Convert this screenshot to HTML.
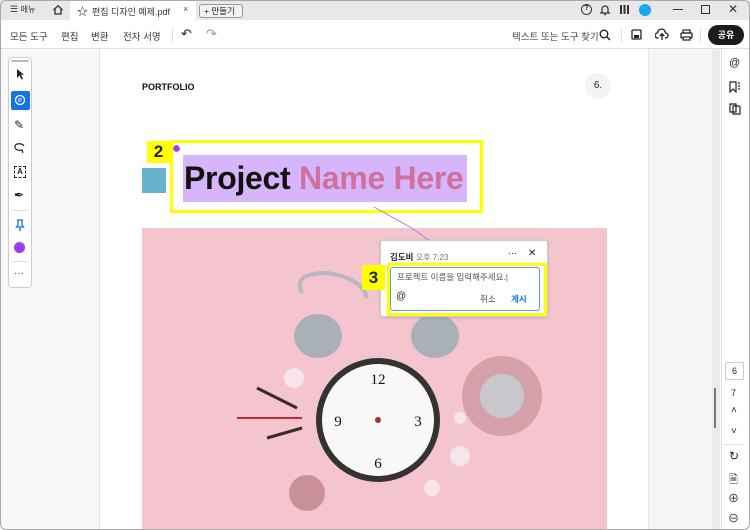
<!DOCTYPE html>
<html><head><meta charset="utf-8"><style>
*{box-sizing:border-box;margin:0;padding:0}
body{width:750px;height:530px;overflow:hidden;font-family:"Liberation Sans","Noto Sans CJK KR",sans-serif;background:#fff;position:relative;color:#222}
.a{position:absolute}
</style></head><body>
<div class="a" style="left:0;top:0;width:750px;height:20px;background:#e8e8e8"></div>
<div class="a" style="left:10px;top:4px;font-size:9px;color:#333">☰ <span style="font-size:8px">메뉴</span></div>
<svg class="a" style="left:52px;top:4px" width="12" height="12" viewBox="0 0 12 12"><path d="M1.5 6 6 1.8 10.5 6M3 5v5h6V5" fill="none" stroke="#333" stroke-width="1.3"/></svg>
<div class="a" style="left:70px;top:0;width:126px;height:21px;background:#fff"></div>
<div class="a" style="left:77px;top:3px;font-size:11px;color:#333">☆</div>
<div class="a" style="left:92px;top:5px;font-size:9px;color:#333">편집 디자인 예제.pdf</div>
<div class="a" style="left:183px;top:4px;font-size:9px;color:#555">×</div>
<div class="a" style="left:199px;top:4px;width:44px;height:14px;border:1px solid #999;border-radius:3px;font-size:8.5px;padding-left:4px;line-height:12px;background:#f2f2f2">+ 만들기</div>
<div class="a" style="left:581px;top:4px;width:11px;height:11px;border:1.3px solid #333;border-radius:50%;font-size:7px;text-align:center;line-height:8px;font-weight:bold">?</div>
<svg class="a" style="left:599px;top:3px" width="12" height="13"><path d="M3 9V6a3 3 0 0 1 6 0v3l1 1H2zM5 11.5h2" fill="none" stroke="#333" stroke-width="1.3"/></svg>
<div class="a" style="left:620px;top:5px;width:9px;height:9px;background:repeating-linear-gradient(90deg,#333 0 2px,transparent 2px 3.5px);"></div>
<div class="a" style="left:639px;top:4px;width:12px;height:12px;border-radius:50%;background:#1ba8e8"></div>
<div class="a" style="left:673px;top:9px;width:10px;height:1.3px;background:#333"></div>
<div class="a" style="left:701px;top:5px;width:9px;height:9px;border:1.2px solid #333"></div>
<div class="a" style="left:728px;top:2px;font-size:12px;color:#333">✕</div>
<div class="a" style="left:10px;top:29px;font-size:9.5px;color:#333">모든 도구</div>
<div class="a" style="left:61px;top:29px;font-size:9.5px;color:#333">편집</div>
<div class="a" style="left:91px;top:29px;font-size:9.5px;color:#333">변환</div>
<div class="a" style="left:123px;top:29px;font-size:9.5px;color:#333">전자 서명</div>
<div class="a" style="left:172px;top:28px;width:1px;height:14px;background:#ddd"></div>
<div class="a" style="left:181px;top:26px;font-size:13px;color:#222">↶</div>
<div class="a" style="left:206px;top:26px;font-size:13px;color:#999">↷</div>
<div class="a" style="left:512px;top:29px;font-size:9.5px;color:#444">텍스트 또는 도구 찾기</div>
<svg class="a" style="left:599px;top:29px" width="12" height="12"><circle cx="5" cy="5" r="3.8" fill="none" stroke="#222" stroke-width="1.4"/><path d="M8 8 11 11" stroke="#222" stroke-width="1.5"/></svg>
<div class="a" style="left:621px;top:28px;width:1px;height:14px;background:#ddd"></div>
<svg class="a" style="left:631px;top:29px" width="11" height="11"><rect x="1" y="1" width="9" height="9" rx="1" fill="none" stroke="#222" stroke-width="1.3"/><rect x="3" y="6" width="5" height="3" fill="#222"/></svg>
<svg class="a" style="left:655px;top:28px" width="14" height="13"><path d="M3.5 10H2.5a2.5 2.5 0 0 1 0-5 4 4 0 0 1 8 0 2.5 2.5 0 0 1 0 5H10M7 12V6M4.8 8 7 5.8 9.2 8" fill="none" stroke="#222" stroke-width="1.3"/></svg>
<svg class="a" style="left:680px;top:29px" width="13" height="12"><rect x="3" y="1" width="7" height="3" fill="none" stroke="#222" stroke-width="1.2"/><rect x="1" y="4" width="11" height="5" rx="1" fill="none" stroke="#222" stroke-width="1.3"/><rect x="3" y="8" width="7" height="3" fill="#fff" stroke="#222" stroke-width="1.2"/></svg>
<div class="a" style="left:700px;top:28px;width:1px;height:14px;background:#ddd"></div>
<div class="a" style="left:708px;top:25px;width:36px;height:20px;border-radius:10px;background:#1c1c1c;color:#fff;font-size:9px;font-weight:bold;text-align:center;line-height:20px">공유</div>
<div class="a" style="left:0;top:48px;width:750px;height:1px;background:#ddd"></div>
<div class="a" style="left:0;top:49px;width:100px;height:481px;background:#f8f8f8;border-right:1px solid #e0e0e0"></div>
<div class="a" style="left:8px;top:57px;width:24px;height:231px;background:#fff;border:1px solid #ccc;border-radius:4px"></div>
<div class="a" style="left:11px;top:60px;width:18px;height:2px;background:#bbb;border-radius:1px"></div>
<svg class="a" style="left:15px;top:68px" width="12" height="13"><path d="M2 1v9l2.5-2.5 2 4 1.5-.7-2-4H9z" fill="#222"/></svg>
<div class="a" style="left:11px;top:91px;width:19px;height:19px;background:#1473e6;border-radius:2px"></div>
<svg class="a" style="left:14px;top:94px" width="13" height="13"><circle cx="6" cy="6" r="4.5" fill="none" stroke="#fff" stroke-width="1.3"/><path d="M4 5h4M4 7h3" stroke="#fff"/></svg>
<div class="a" style="left:14px;top:118px;font-size:12px;color:#222">✎</div>
<svg class="a" style="left:13px;top:142px" width="14" height="12"><path d="M11 4C9 1 3 1 2 4s3 5 7 4l1 3" fill="none" stroke="#222" stroke-width="1.2"/></svg>
<div class="a" style="left:14px;top:166px;width:12px;height:12px;border:1px dashed #222;font-size:8px;text-align:center;line-height:10px;font-weight:bold">A</div>
<div class="a" style="left:14px;top:188px;font-size:12px">✒</div>
<div class="a" style="left:12px;top:210px;width:16px;height:1px;background:#ddd"></div>
<svg class="a" style="left:15px;top:219px" width="10" height="13"><path d="M2 1h6M3 1v5L1.5 8h7L7 6V1M5 8v4" fill="none" stroke="#1473e6" stroke-width="1.3"/></svg>
<div class="a" style="left:14px;top:242px;width:11px;height:11px;border-radius:50%;background:#9a3cf5"></div>
<div class="a" style="left:12px;top:261px;width:16px;height:1px;background:#ddd"></div>
<div class="a" style="left:14px;top:268px;font-size:10px">···</div>
<div class="a" style="left:648px;top:49px;width:72px;height:481px;background:#f6f6f6;border-left:1px solid #e6e6e6"></div>
<div class="a" style="left:712px;top:49px;width:8px;height:481px;background:#ececec"></div>
<div class="a" style="left:714px;top:388px;width:2px;height:40px;background:#777"></div>
<div class="a" style="left:721px;top:49px;width:29px;height:481px;background:#fff;border-left:1px solid #ddd"></div>
<div class="a" style="left:729px;top:57px;font-size:11px">@</div>
<svg class="a" style="left:729px;top:81px" width="12" height="12"><path d="M1 1h6v10L4 8l-3 3zM9 2h2M9 5h2M9 8h2" fill="none" stroke="#222" stroke-width="1.2"/></svg>
<svg class="a" style="left:729px;top:103px" width="12" height="12"><path d="M1 1h6v8H1zM4 3h6l1 1v7H4z" fill="#fff" stroke="#222" stroke-width="1.2"/></svg>
<div class="a" style="left:725px;top:362px;width:19px;height:18px;border:1px solid #ccc;border-radius:2px;font-size:9px;text-align:center;line-height:16px">6</div>
<div class="a" style="left:731px;top:388px;font-size:9px">7</div>
<div class="a" style="left:731px;top:405px;font-size:10px">˄</div>
<div class="a" style="left:731px;top:426px;font-size:10px">˅</div>
<div class="a" style="left:724px;top:444px;width:20px;height:1px;background:#ddd"></div>
<div class="a" style="left:729px;top:449px;font-size:12px">↻</div>
<div class="a" style="left:729px;top:471px;font-size:11px">🗎︎</div>
<div class="a" style="left:728px;top:490px;font-size:11px">⊕</div>
<div class="a" style="left:728px;top:510px;font-size:11px">⊖</div>
<div class="a" style="left:142px;top:82px;font-size:9px;font-weight:bold;color:#111">PORTFOLIO</div>
<div class="a" style="left:585px;top:73px;width:26px;height:26px;border-radius:50%;background:#f3f3f3;font-size:10px;text-align:center;line-height:26px">6.</div>
<div class="a" style="left:142px;top:168px;width:24px;height:25px;background:#67b2cc"></div>
<div class="a" style="left:183px;top:155px;width:284px;height:47px;background:#d7b5fb"></div>
<div class="a" style="left:184px;top:160px;font-size:32px;font-weight:bold;letter-spacing:-0.3px;color:#111;white-space:nowrap">Project <span style="color:#d1709e">Name Here</span></div>
<div class="a" style="left:170px;top:140px;width:313px;height:73px;border:3px solid #ffff00"></div>
<div class="a" style="left:147px;top:141px;width:23px;height:22px;background:#ffff00;font-size:17px;font-weight:bold;text-align:center;line-height:22px">2</div>
<div class="a" style="left:173px;top:145px;width:7px;height:7px;border-radius:50%;background:#9a3cf5;border:1.5px dotted #c9a"></div>
<div class="a" style="left:142px;top:228px;width:465px;height:302px;background:#f4c5cf;overflow:hidden">
<svg width="465" height="302">
<g fill="#aab0b8"><ellipse cx="176" cy="108" rx="24" ry="22"/><ellipse cx="293" cy="108" rx="24" ry="22"/></g>
<path d="M160 65 Q150 45 185 45 Q220 50 225 70" fill="none" stroke="#b7b7bf" stroke-width="4"/>
<path d="M270 65 Q260 45 290 40 Q325 40 318 70" fill="none" stroke="#b7b7bf" stroke-width="4"/>
<circle cx="236" cy="192" r="62" fill="#333"/><circle cx="236" cy="192" r="56" fill="#f8f8f8"/>
<g font-size="15" font-family="Liberation Serif" fill="#111" text-anchor="middle"><text x="236" y="156">12</text><text x="236" y="240">6</text><text x="276" y="198">3</text><text x="196" y="198">9</text></g>
<circle cx="236" cy="192" r="3" fill="#933"/>
<ellipse cx="360" cy="168" rx="40" ry="40" fill="#c8909a" opacity=".7"/><circle cx="360" cy="168" r="22" fill="#c8c8cc"/>
<g fill="#f4e6ea"><circle cx="152" cy="150" r="10"/><circle cx="318" cy="228" r="10"/><circle cx="290" cy="260" r="8"/><circle cx="318" cy="190" r="6"/></g>
<path d="M95 190 L160 190" stroke="#c0282f" stroke-width="2"/>
<path d="M115 160 L155 180 M125 210 L160 200" stroke="#3a2a2a" stroke-width="3"/>
<circle cx="165" cy="265" r="18" fill="#c9909c"/>
</svg></div>
<svg class="a" style="left:370px;top:205px" width="80" height="40"><path d="M4 2 L40 22 L60 36" fill="none" stroke="#a77de8" stroke-width="1"/></svg>
<div class="a" style="left:380px;top:240px;width:168px;height:77px;background:#fff;border:1px solid #ccc;border-radius:3px;box-shadow:0 1px 3px rgba(0,0,0,.15)"></div>
<div class="a" style="left:390px;top:251px;font-size:8.5px;font-weight:bold">김도비 <span style="font-weight:normal;color:#777;font-size:8px">오후 7:23</span></div>
<div class="a" style="left:508px;top:248px;font-size:9px">···</div>
<div class="a" style="left:528px;top:248px;font-size:10px">✕</div>
<div class="a" style="left:387px;top:263px;width:160px;height:53px;border:3px solid #ffff00"></div>
<div class="a" style="left:390px;top:267px;width:150px;height:44px;border:1px solid #5b9bea;border-radius:3px"></div>
<div class="a" style="left:397px;top:271px;font-size:8.5px;color:#555">프로젝트 이름을 입력해주세요.|</div>
<div class="a" style="left:396px;top:291px;font-size:10px;color:#222">@</div>
<div class="a" style="left:480px;top:293px;font-size:8.5px;color:#444">취소</div>
<div class="a" style="left:511px;top:293px;font-size:8.5px;color:#1473e6;font-weight:bold">게시</div>
<div class="a" style="left:362px;top:265px;width:23px;height:25px;background:#ffff00;font-size:17px;font-weight:bold;text-align:center;line-height:25px">3</div>
<div class="a" style="left:0;top:0;width:750px;height:530px;border:1px solid #aaa;border-radius:6px;pointer-events:none"></div>
</body></html>
